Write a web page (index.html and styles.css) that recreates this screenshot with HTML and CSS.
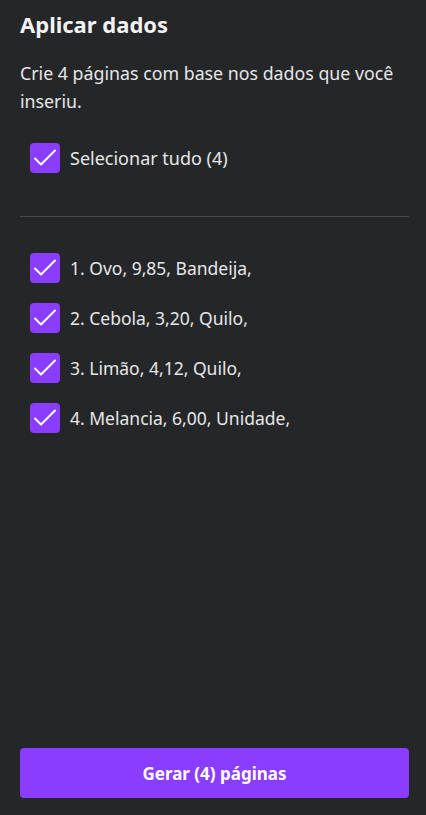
FILE: index.html
```html
<!DOCTYPE html>
<html lang="pt">
<head>
  <meta charset="UTF-8">
  <title>Aplicar dados</title>
  <link rel="stylesheet" href="styles.css">
</head>
<body>
  <div class="panel">
    <h1 class="title">Aplicar dados</h1>
    <p class="desc">Crie 4 páginas com base nos dados que você inseriu.</p>

    <label class="check-row select-all">
      <span class="box">
        <svg viewBox="0 0 30 30" width="30" height="30"><path d="M5 15.5 L11 21.5 L25 7.5" /></svg>
      </span>
      <span>Selecionar tudo (4)</span>
    </label>

    <hr class="divider">

    <div class="items">
      <label class="check-row">
        <span class="box"><svg viewBox="0 0 30 30" width="30" height="30"><path d="M5 15.5 L11 21.5 L25 7.5" /></svg></span>
        <span>1. Ovo, 9,85, Bandeija,</span>
      </label>
      <label class="check-row">
        <span class="box"><svg viewBox="0 0 30 30" width="30" height="30"><path d="M5 15.5 L11 21.5 L25 7.5" /></svg></span>
        <span>2. Cebola, 3,20, Quilo,</span>
      </label>
      <label class="check-row">
        <span class="box"><svg viewBox="0 0 30 30" width="30" height="30"><path d="M5 15.5 L11 21.5 L25 7.5" /></svg></span>
        <span>3. Limão, 4,12, Quilo,</span>
      </label>
      <label class="check-row">
        <span class="box"><svg viewBox="0 0 30 30" width="30" height="30"><path d="M5 15.5 L11 21.5 L25 7.5" /></svg></span>
        <span>4. Melancia, 6,00, Unidade,</span>
      </label>
    </div>

    <button class="btn">Gerar (4) páginas</button>
  </div>
</body>
</html>
```

FILE: styles.css
```css
body, html {
  margin: 0;
  padding: 0;
  background-color: #252628;
  font-family: "Noto Sans", "Open Sans", sans-serif;
  color: #e6e6e8;
}
.panel {
  display: flex;
  flex-direction: column;
  height: 815px;
  box-sizing: border-box;
  padding: 9px 17px 17px 20px;
}
.title {
  margin: 0;
  font-size: 22px;
  line-height: 30px;
  font-weight: 700;
  color: #f2f2f4;
}
.desc {
  margin: 20px 0 0;
  font-size: 17.8px;
  line-height: 28px;
}
.check-row {
  display: flex;
  align-items: center;
  gap: 10px;
  margin-left: 10px;
  font-size: 17.5px;
  line-height: 30px;
}
.select-all {
  margin-top: 28px;
  font-size: 18px;
}
.box {
  width: 30px;
  height: 30px;
  border-radius: 4px;
  background: #8b3dff;
  flex: none;
}
.box svg {
  display: block;
}
.box path {
  fill: none;
  stroke: #fff;
  stroke-width: 2;
  stroke-linecap: round;
  stroke-linejoin: round;
}
.divider {
  border: none;
  border-top: 1px solid #48494c;
  margin: 43px 0 0;
}
.items {
  display: flex;
  flex-direction: column;
  gap: 20px;
  margin-top: 36px;
}
.btn {
  margin-top: auto;
  height: 50px;
  border: none;
  border-radius: 4px;
  background: #8b3dff;
  color: #fff;
  font-family: inherit;
  font-size: 17px;
  font-weight: 700;
  cursor: pointer;
}
```
